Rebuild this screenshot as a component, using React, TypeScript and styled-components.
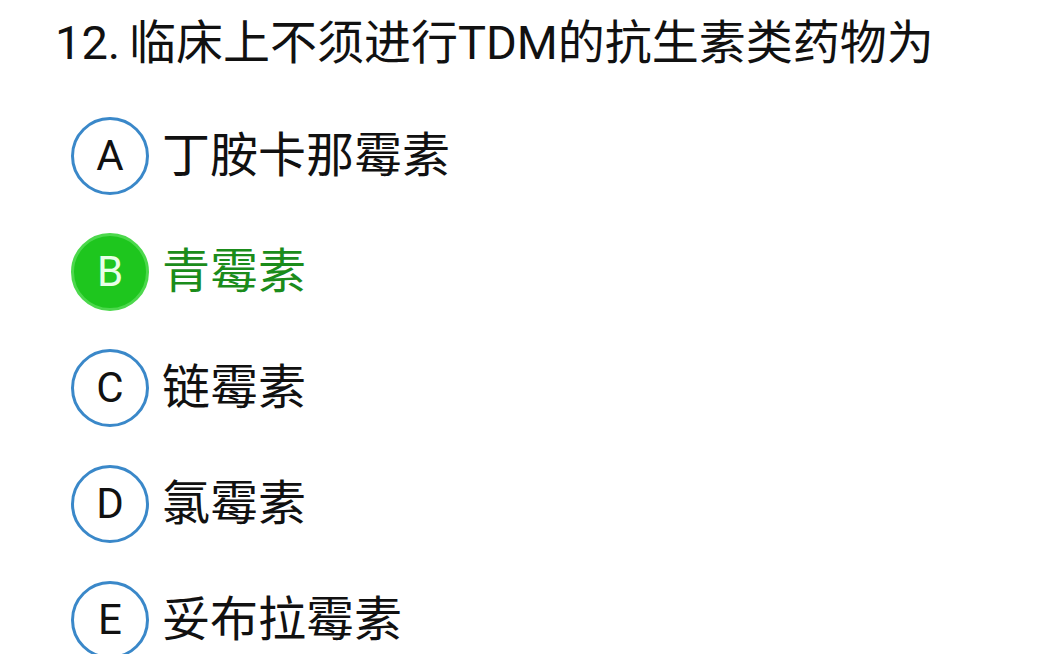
import * as React from 'react';
import styled, { createGlobalStyle } from 'styled-components';

const GlobalStyle = createGlobalStyle`
  html, body {
    margin: 0;
    padding: 0;
    background: #ffffff;
  }
  body {
    font-family: Roboto, "Noto Sans CJK SC", sans-serif;
    color: #111111;
  }
`;

const Page = styled.div`
  padding: 13px 0 0 55px;
`;

const Question = styled.div`
  font-size: 47px;
  line-height: 60px;
  color: #111111;
  white-space: nowrap;
  word-spacing: -3px;
`;

const OptionList = styled.div`
  display: flex;
  flex-direction: column;
  gap: 38px;
  margin-top: 44px;
  padding-left: 16px;
`;

const OptionRow = styled.div`
  display: flex;
  align-items: center;
  gap: 13px;
  height: 78px;
`;

const Badge = styled.div<{ $correct?: boolean }>`
  box-sizing: border-box;
  width: 78px;
  height: 78px;
  flex: 0 0 78px;
  border-radius: 50%;
  display: flex;
  align-items: center;
  justify-content: center;
  font-family: Roboto, sans-serif;
  font-size: 42px;
  line-height: 1;
  color: ${(p) => (p.$correct ? '#e8ffe8' : '#111111')};
  background: ${(p) => (p.$correct ? '#1ec61e' : '#ffffff')};
  border: 3px solid ${(p) => (p.$correct ? '#4cd84c' : '#3a88c9')};
`;

const OptionText = styled.div<{ $correct?: boolean }>`
  font-size: 48px;
  line-height: 1;
  white-space: nowrap;
  color: ${(p) => (p.$correct ? '#1b8c1b' : '#111111')};
`;

const options = [
  { key: 'A', text: '丁胺卡那霉素' },
  { key: 'B', text: '青霉素', correct: true },
  { key: 'C', text: '链霉素' },
  { key: 'D', text: '氯霉素' },
  { key: 'E', text: '妥布拉霉素' },
];

export default function App() {
  return (
    <>
      <GlobalStyle />
      <Page>
        <Question>12. 临床上不须进行TDM的抗生素类药物为</Question>
        <OptionList>
          {options.map((o) => (
            <OptionRow key={o.key}>
              <Badge $correct={o.correct}>{o.key}</Badge>
              <OptionText $correct={o.correct}>{o.text}</OptionText>
            </OptionRow>
          ))}
        </OptionList>
      </Page>
    </>
  );
}
